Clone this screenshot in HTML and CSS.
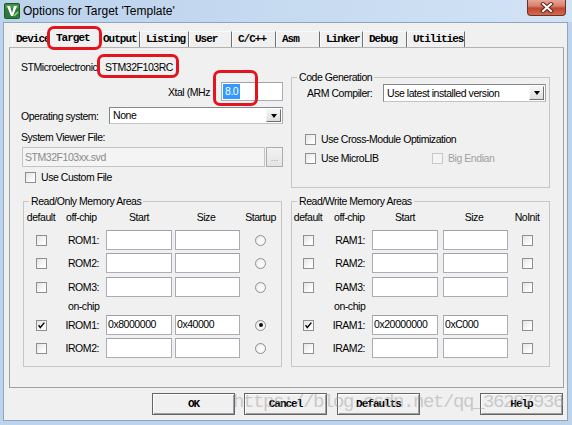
FILE: index.html
```html
<!DOCTYPE html>
<html>
<head>
<meta charset="utf-8">
<title>Options for Target 'Template'</title>
<link rel="stylesheet" href="styles.css">
</head>
<body>
<div class="window">
  <div class="titlebar">
    <svg class="appicon" viewBox="0 0 16 16" width="16" height="16">
      <rect x="0.5" y="0.5" width="15" height="15" rx="1" fill="#2d7a3a" stroke="#1d5a28"/>
      <rect x="1.5" y="1.5" width="13" height="4" fill="#4a9a55"/>
      <polygon points="3,3 6,3 8,10 10,3 13,3 9,13 7,13" fill="#fff"/>
      <line x1="10" y1="13" x2="14" y2="9" stroke="#8fe08f" stroke-width="1.2"/>
    </svg>
    <span class="title">Options for Target 'Template'</span>
    <div class="close">
      <svg viewBox="0 0 14 11" width="14" height="11">
        <path d="M3 2 L11 9 M11 2 L3 9" stroke="#5b241b" stroke-width="4" stroke-linecap="square"/>
        <path d="M3 2 L11 9 M11 2 L3 9" stroke="#fff" stroke-width="2" stroke-linecap="square"/>
      </svg>
    </div>
  </div>

  <div class="client">
    <div class="tabs">
      <div class="tab">Device</div>
      <div class="tab sel">Target</div>
      <div class="tab">Output</div>
      <div class="tab">Listing</div>
      <div class="tab">User</div>
      <div class="tab">C/C++</div>
      <div class="tab">Asm</div>
      <div class="tab">Linker</div>
      <div class="tab">Debug</div>
      <div class="tab">Utilities</div>
    </div>

    <div class="panel">
      <div class="col col-left">
        <div class="devrow"><span class="devlabel">STMicroelectronic</span><span class="dev">STM32F103RC</span></div>
        <div class="xtalrow">
          <span class="xtallabel">Xtal (MHz</span>
          <div class="input xtal"><span class="hl">8.0</span></div>
        </div>
        <div class="osrow">
          <span class="oslabel">Operating system:</span>
          <div class="select os"><span class="seltext">None</span><span class="dd"><span class="tri"></span></span></div>
        </div>
        <div class="svflabel">System Viewer File:</div>
        <div class="svfrow">
          <div class="input disabled">STM32F103xx.svd</div>
          <div class="browse">...</div>
        </div>
        <div class="check custom"><span class="cb"></span><span>Use Custom File</span></div>

        <fieldset class="group mem ro">
          <legend>Read/Only Memory Areas</legend>
          <div class="mrow head">
            <span class="c1">default</span><span class="c2 h">off-chip</span><span class="c3">Start</span><span class="c4">Size</span><span class="c5">Startup</span>
          </div>
          <div class="mrow r1">
            <span class="c1"><span class="cb"></span></span><span class="c2">ROM1:</span><span class="c3"><span class="input mi"></span></span><span class="c4"><span class="input mi"></span></span><span class="c5"><span class="radio"></span></span>
          </div>
          <div class="mrow r2">
            <span class="c1"><span class="cb"></span></span><span class="c2">ROM2:</span><span class="c3"><span class="input mi"></span></span><span class="c4"><span class="input mi"></span></span><span class="c5"><span class="radio"></span></span>
          </div>
          <div class="mrow r3">
            <span class="c1"><span class="cb"></span></span><span class="c2">ROM3:</span><span class="c3"><span class="input mi"></span></span><span class="c4"><span class="input mi"></span></span><span class="c5"><span class="radio"></span></span>
          </div>
          <div class="mrow onchip"><span class="c1"></span><span class="c2 h oc">on-chip</span></div>
          <div class="mrow i1">
            <span class="c1"><span class="cb on"><svg viewBox="0 0 11 11" width="9" height="9"><path d="M2 5 L4 8 L9 2" fill="none" stroke="#000" stroke-width="1.7"/></svg></span></span><span class="c2">IROM1:</span><span class="c3"><span class="input mi">0x8000000</span></span><span class="c4"><span class="input mi">0x40000</span></span><span class="c5"><span class="radio on"></span></span>
          </div>
          <div class="mrow i2">
            <span class="c1"><span class="cb"></span></span><span class="c2">IROM2:</span><span class="c3"><span class="input mi"></span></span><span class="c4"><span class="input mi"></span></span><span class="c5"><span class="radio"></span></span>
          </div>
        </fieldset>
      </div>

      <div class="col col-right">
        <fieldset class="group codegen">
          <legend>Code Generation</legend>
          <div class="armrow">
            <span class="armlabel">ARM Compiler:</span>
            <div class="select arm"><span class="seltext">Use latest installed version</span><span class="dd"><span class="tri"></span></span></div>
          </div>
          <div class="check cmo"><span class="cb"></span><span>Use Cross-Module Optimization</span></div>
          <div class="check micro">
            <span class="cb"></span><span class="mlib">Use MicroLIB</span>
            <span class="cb dis"></span><span class="distext">Big Endian</span>
          </div>
        </fieldset>

        <fieldset class="group mem rw">
          <legend>Read/Write Memory Areas</legend>
          <div class="mrow head">
            <span class="c1">default</span><span class="c2 h">off-chip</span><span class="c3">Start</span><span class="c4">Size</span><span class="c5">NoInit</span>
          </div>
          <div class="mrow r1">
            <span class="c1"><span class="cb"></span></span><span class="c2">RAM1:</span><span class="c3"><span class="input mi"></span></span><span class="c4"><span class="input mi"></span></span><span class="c5"><span class="cb"></span></span>
          </div>
          <div class="mrow r2">
            <span class="c1"><span class="cb"></span></span><span class="c2">RAM2:</span><span class="c3"><span class="input mi"></span></span><span class="c4"><span class="input mi"></span></span><span class="c5"><span class="cb"></span></span>
          </div>
          <div class="mrow r3">
            <span class="c1"><span class="cb"></span></span><span class="c2">RAM3:</span><span class="c3"><span class="input mi"></span></span><span class="c4"><span class="input mi"></span></span><span class="c5"><span class="cb"></span></span>
          </div>
          <div class="mrow onchip"><span class="c1"></span><span class="c2 h">on-chip</span></div>
          <div class="mrow i1">
            <span class="c1"><span class="cb on"><svg viewBox="0 0 11 11" width="9" height="9"><path d="M2 5 L4 8 L9 2" fill="none" stroke="#000" stroke-width="1.7"/></svg></span></span><span class="c2">IRAM1:</span><span class="c3"><span class="input mi">0x20000000</span></span><span class="c4"><span class="input mi">0xC000</span></span><span class="c5"><span class="cb"></span></span>
          </div>
          <div class="mrow i2">
            <span class="c1"><span class="cb"></span></span><span class="c2">IRAM2:</span><span class="c3"><span class="input mi"></span></span><span class="c4"><span class="input mi"></span></span><span class="c5"><span class="cb"></span></span>
          </div>
        </fieldset>
      </div>
    </div>

    <div class="buttons">
      <div class="btn ok">OK</div>
      <div class="btn cancel">Cancel</div>
      <div class="btn defaults">Defaults</div>
      <div class="btn help">Help</div>
    </div>
  </div>

  <div class="mark mark-tab"></div>
  <div class="mark mark-dev"></div>
  <div class="mark mark-xtal"></div>
  <div class="watermark">https://blog.csdn.net/qq_36287936</div>
</div>
</body>
</html>
```

FILE: styles.css
```css
* { box-sizing: border-box; }
html, body { margin: 0; padding: 0; }
body {
  width: 572px;
  height: 425px;
  overflow: hidden;
  font-family: "Liberation Sans", Arial, sans-serif;
  font-size: 10.5px;
  letter-spacing: -0.45px;
  color: #000;
  background: #bfd5ec;
}

.window {
  position: relative;
  width: 572px;
  height: 425px;
  display: flex;
  flex-direction: column;
  padding: 0 4px 4px 3px;
  background: #bdd4ed;
}

/* ---------- title bar ---------- */
.titlebar {
  height: 22px;
  margin: 0 -4px 0 -3px;
  display: flex;
  align-items: center;
  background: linear-gradient(90deg, #bcd3ec 0%, #c6daf0 50%, #d2e3f5 100%);
}
.appicon { margin-left: 4px; flex: none; }
.title {
  margin-left: 3px;
  font-size: 12px;
  letter-spacing: 0;
  color: #000;
}
.close {
  margin-left: auto;
  margin-right: 6px;
  align-self: flex-start;
  width: 39px;
  height: 16px;
  border: 1px solid #6e2f26;
  border-top: none;
  border-radius: 0 0 4px 4px;
  background: linear-gradient(180deg, #e7a597 0%, #d9806d 40%, #c4472f 55%, #d16a52 100%);
  display: flex;
  align-items: center;
  justify-content: center;
}

/* ---------- client ---------- */
.client {
  flex: 1;
  background: #f0f0f0;
  border: 1px solid #8fa4bd;
  display: flex;
  flex-direction: column;
}

.tabs {
  display: flex;
  align-items: flex-end;
  height: 18px;
  margin: 6px 0 0 8px;
  position: relative;
  z-index: 2;
}
.tab {
  height: 16px;
  line-height: 15px;
  padding-left: 5px;
  font-family: "Liberation Mono", monospace;
  font-size: 11px;
  font-weight: bold;
  letter-spacing: -1px;
  border-top: 1px solid #fbfbfb;
  border-left: 1px solid #fbfbfb;
  border-right: 1px solid #707070;
  color: #000;
}
.tab:nth-child(1) { width: 38px; padding-left: 3px; border-right: none; }
.tab:nth-child(2) { width: 50px; }
.tab:nth-child(3) { width: 40px; padding-left: 3px; border-left: none; }
.tab:nth-child(4) { width: 49px; }
.tab:nth-child(5) { width: 43px; }
.tab:nth-child(6) { width: 44px; }
.tab:nth-child(7) { width: 44px; }
.tab:nth-child(8) { width: 43px; }
.tab:nth-child(9) { width: 44px; }
.tab:nth-child(10) { width: 58px; }
.tab.sel {
  height: 19px;
  line-height: 17px;
  margin-bottom: -1px;
  background: #f0f0f0;
  border-left: 1px solid #fff;
  border-top: 1px solid #fff;
  border-right: 1px solid #707070;
}

.panel {
  margin-left: 5px;
  width: 555px;
  height: 341px;
  border: 1px solid #a0a0a0;
  border-top-color: #b4b4b4;
  display: flex;
  position: relative;
  z-index: 1;
}

.col { display: flex; flex-direction: column; }
.col-left { width: 262px; margin-left: 11px; }
.col-right { width: 259px; margin-left: 8px; }

/* ---------- left top ---------- */
.devrow { margin-top: 12px; height: 14px; line-height: 14px; display: flex; white-space: nowrap; }
.devlabel { width: 84px; }

.xtalrow {
  margin-top: 8px;
  height: 19px;
  display: flex;
  align-items: center;
  justify-content: flex-end;
}
.xtallabel { margin-right: 11px; }
.input {
  display: block;
  background: #fff;
  border: 1px solid #abadb3;
  border-top-color: #9ea2ab;
  white-space: nowrap;
  overflow: hidden;
}
.xtal { width: 62px; height: 19px; padding: 1px 0 0 1px; line-height: 14px; }
.hl { display: inline-block; background: #3399ff; color: #fff; padding: 0 2px; height: 15px; }

.osrow { margin-top: 6px; height: 17px; display: flex; align-items: center; }
.oslabel { width: 88px; white-space: nowrap; }
.select {
  display: flex;
  align-items: center;
  background: #fff;
  border: 1px solid #7a7a7a;
  border-color: #828790 #a5a9b0 #c0c3c8 #828790;
  padding: 1px;
}
.os { width: 174px; height: 17px; }
.seltext { flex: 1; padding-left: 2px; line-height: 13px; white-space: nowrap; }
.dd {
  width: 15px;
  height: 100%;
  background: linear-gradient(#f6f6f6, #dedede);
  border: 1px solid #a0a0a0;
  border-color: #f6f6f6 #707070 #707070 #f6f6f6;
  display: flex;
  align-items: center;
  justify-content: center;
}
.tri {
  width: 0; height: 0;
  border-left: 3.5px solid transparent;
  border-right: 3.5px solid transparent;
  border-top: 4px solid #000;
}

.svflabel { margin-top: 7px; height: 12px; line-height: 12px; }
.svfrow { margin-top: 4px; height: 20px; display: flex; }
.disabled {
  margin-left: 1px;
  width: 244px;
  height: 20px;
  background: #f4f4f4;
  border-color: #c4c4c4;
  color: #8a8a8a;
  padding: 2px 0 0 2px;
  line-height: 14px;
}
.browse {
  margin-left: 1px;
  width: 17px;
  height: 20px;
  background: linear-gradient(#f2f2f2, #e4e4e4);
  border: 1px solid #acacac;
  color: #9a9a9a;
  font-size: 9px;
  letter-spacing: 0;
  text-align: center;
  line-height: 20px;
}

.check { display: flex; align-items: center; white-space: nowrap; }
.custom { margin-top: 4px; height: 12px; padding-left: 4px; }
.cb {
  flex: none;
  display: inline-flex;
  align-items: center;
  justify-content: center;
  width: 11px;
  height: 11px;
  border: 1px solid #8e8f8f;
  background: linear-gradient(135deg, #e4e4e4 0%, #fbfbfb 70%, #fff 100%);
  margin-right: 5px;
}
.cb.dis { border-color: #c8c8c8; background: #f4f4f4; }
.distext { color: #a0a0a0; }

/* ---------- group boxes ---------- */
.group {
  margin: 0;
  padding: 0;
  border: 1px solid #c6c6c6;
  min-width: 0;
}
.group legend {
  margin-left: 5px;
  padding: 0 2px;
  line-height: 13px;
}

.codegen { margin-top: 23px; height: 117px; }
.armrow { display: flex; align-items: center; height: 18px; padding-left: 15px; }
.armlabel { width: 76px; }
.arm { width: 163px; height: 18px; }
.cmo { margin-top: 31px; height: 12px; padding-left: 13px; }
.micro { margin-top: 7px; height: 12px; padding-left: 13px; }
.mlib { width: 111px; }

.mem { height: 172px; }
.ro { margin-top: 12px; margin-left: 2px; width: 259px; }
.rw { margin-top: 7px; }

.mrow {
  display: grid;
  height: 20px;
  align-items: center;
  margin-top: 3px;
  white-space: nowrap;
}
.ro .mrow { grid-template-columns: 34px 48px 69px 65px 41px; }
.rw .mrow { grid-template-columns: 32px 48px 71px 65px 41px; }
.mrow.head { height: 18px; margin-top: 0; }
.mrow.r1 { margin-top: 4px; }
.mrow.r3 { margin-top: 4px; }
.mrow.onchip { height: 18px; margin-top: 0; }
.mrow.i1 { margin-top: 0; }

.mrow .c1 { display: flex; justify-content: center; text-align: center; }
.mrow .c1 .cb { margin-right: 0; }
.mrow .c2 { text-align: right; padding-right: 7px; }
.mrow .c2.h { text-align: left; padding-left: 8px; padding-right: 0; }
.mrow .c2.oc { padding-left: 10px; }
.rw .mrow .c2.h { padding-left: 10px; }
.rw .mrow .c2 { padding-right: 7px; }
.mrow .c3 { text-align: left; }
.mrow .c4 { text-align: left; }
.mrow.head .c3 { width: 66px; text-align: center; }
.mrow.head .c4 { width: 62px; text-align: center; }
.mrow .c5 { display: flex; justify-content: center; }
.rw .mrow .c5 { padding-right: 3px; }
.rw .mrow .c5 .cb { margin-right: 0; }

.mi { width: 66px; height: 20px; padding: 1px 0 0 1px; line-height: 14px; }
.c4 .mi { width: 65px; }

.radio {
  width: 11px;
  height: 11px;
  border-radius: 50%;
  border: 1px solid #8e8f8f;
  background: radial-gradient(circle at 60% 60%, #fff 0%, #f4f4f4 50%, #dcdcdc 100%);
  display: flex;
  align-items: center;
  justify-content: center;
}
.radio.on::after {
  content: "";
  width: 4px;
  height: 4px;
  border-radius: 50%;
  background: #111;
}

/* ---------- buttons ---------- */
.buttons { display: flex; margin-top: 5px; height: 22px; }
.btn {
  width: 83px;
  height: 22px;
  background: #f0f0f0;
  border: 1px solid #646464;
  box-shadow: inset 1px 1px 0 #fff, inset -1px -1px 0 #a0a0a0;
  font-family: "Liberation Mono", monospace;
  font-size: 11px;
  font-weight: bold;
  letter-spacing: -1px;
  text-align: center;
  line-height: 20px;
}
.ok { margin-left: 148px; }
.cancel { margin-left: 9px; }
.defaults { margin-left: 10px; }
.help { margin-left: 60px; }

/* ---------- overlays: annotation marks & watermark ---------- */
.mark {
  position: absolute;
  border: 3px solid #e3141d;
  border-radius: 7px;
  z-index: 5;
}
.mark-tab { left: 47px; top: 26px; width: 55px; height: 24px; }
.mark-dev { left: 97px; top: 54px; width: 82px; height: 24px; }
.mark-xtal { left: 213px; top: 70px; width: 45px; height: 36px; }

.watermark {
  position: absolute;
  left: 233px;
  top: 391px;
  font-family: "Liberation Mono", monospace;
  font-size: 19px;
  letter-spacing: -1.4px;
  color: rgba(160, 160, 160, 0.5);
  white-space: nowrap;
  z-index: 6;
}
```
